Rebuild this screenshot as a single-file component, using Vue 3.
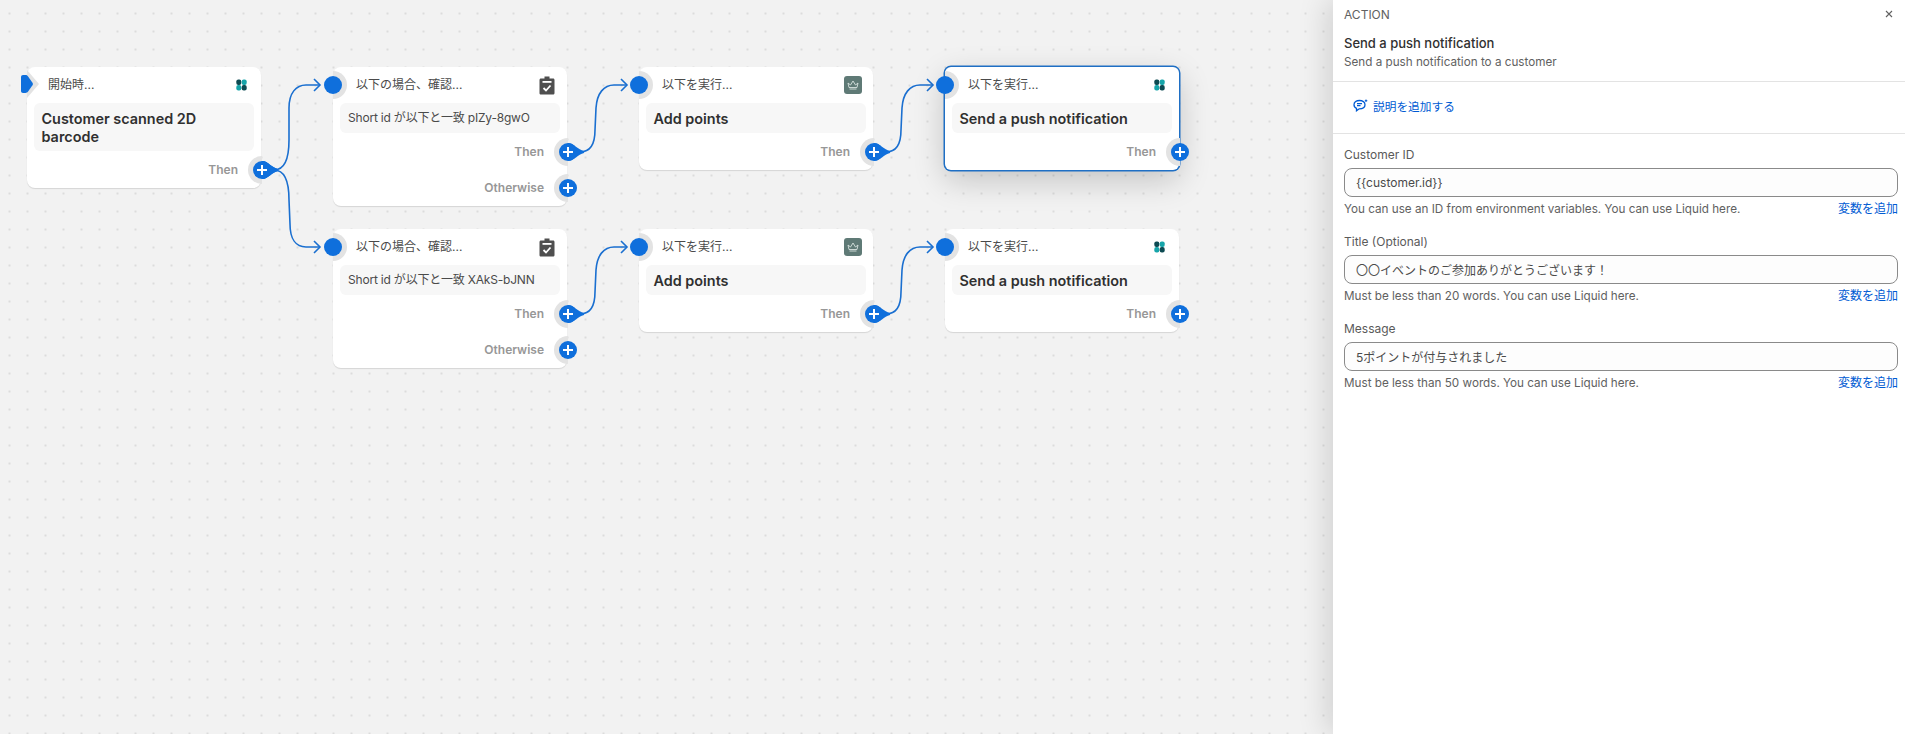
<script setup>
const nodes = [
  { id: 1, x: 27, y: 67, start: true, head: '開始時...', icon: 'logo', title: 'Customer scanned 2D barcode', big: true, outs: ['Then'] },
  { id: 2, x: 333, y: 67, head: '以下の場合、確認...', icon: 'clip', title: 'Short id が以下と一致 pIZy-8gwO', outs: ['Then', 'Otherwise'] },
  { id: 3, x: 639, y: 67, head: '以下を実行...', icon: 'crown', title: 'Add points', big: true, outs: ['Then'] },
  { id: 4, x: 945, y: 67, head: '以下を実行...', icon: 'logo', title: 'Send a push notification', big: true, outs: ['Then'], selected: true },
  { id: 5, x: 333, y: 229, head: '以下の場合、確認...', icon: 'clip', title: 'Short id が以下と一致 XAkS-bJNN', outs: ['Then', 'Otherwise'] },
  { id: 6, x: 639, y: 229, head: '以下を実行...', icon: 'crown', title: 'Add points', big: true, outs: ['Then'] },
  { id: 7, x: 945, y: 229, head: '以下を実行...', icon: 'logo', title: 'Send a push notification', big: true, outs: ['Then'] },
]

// Edges run from the teardrop on a plus button to the arrow in front of the next port.
const tear = (x, y) => `M${x} ${y - 9}C${x + 6} ${y - 9} ${x + 10} ${y - 2} ${x + 16} ${y - 1}L${x + 16} ${y + 1}C${x + 10} ${y + 2} ${x + 6} ${y + 9} ${x} ${y + 9}Z`
const arrow = (x, y) => `M${x - 6} ${y - 6}L${x} ${y}L${x - 6} ${y + 6}`

const edges = [
  { d: 'M274 170C284 170 289 160 289 140L289 108C289 93 296 85 306 85L320 85', from: [262, 170], to: [320, 85] },
  { d: 'M274 170C284 170 289 180 289 200L290 224C290 239 296 247 306 247L320 247', from: [262, 170], to: [320, 247] },
  { d: 'M580 152C590 152 595 145 595 130L596 108C597 93 604 85 614 85L627 85', from: [568, 152], to: [627, 85] },
  { d: 'M886 152C896 152 901 145 901 130L902 108C903 93 910 85 920 85L933 85', from: [874, 152], to: [933, 85] },
  { d: 'M580 314C590 314 595 307 595 292L596 270C597 255 604 247 614 247L627 247', from: [568, 314], to: [627, 247] },
  { d: 'M886 314C896 314 901 307 901 292L902 270C903 255 910 247 920 247L933 247', from: [874, 314], to: [933, 247] },
]

const fields = [
  { label: 'Customer ID', value: '{{customer.id}}', help: 'You can use an ID from environment variables. You can use Liquid here.' },
  { label: 'Title (Optional)', value: '〇〇イベントのご参加ありがとうございます！', help: 'Must be less than 20 words. You can use Liquid here.' },
  { label: 'Message', value: '5ポイントが付与されました', help: 'Must be less than 50 words. You can use Liquid here.' },
]
</script>

<template>
  <div class="page">
    <main class="canvas">
      <svg class="edges" width="1333" height="734">
        <g v-for="(e, i) in edges" :key="i">
          <path class="line" :d="e.d" />
          <path class="line" :d="arrow(e.to[0], e.to[1])" />
          <path class="drop" :d="tear(e.from[0], e.from[1])" />
        </g>
      </svg>

      <section
        v-for="n in nodes"
        :key="n.id"
        class="node"
        :class="{ selected: n.selected, first: n.start }"
        :style="{ left: n.x + 'px', top: n.y + 'px' }"
      >
        <template v-if="n.start">
          <svg class="start" width="20" height="34" viewBox="0 0 20 34">
            <path d="M7 3L19 17L7 31Z" fill="#e3e3e3" />
            <path d="M3 8H5.500C6.500 8 7.300 8.500 7.900 9.200L12.500 15.700C13 16.500 13 17.500 12.500 18.300L7.900 24.800C7.300 25.500 6.500 26 5.500 26H3C1.900 26 1 25.100 1 24V10C1 8.900 1.900 8 3 8Z" fill="#0f6fdc" />
          </svg>
        </template>
        <template v-else>
          <span class="halo in"></span>
          <span class="port"></span>
        </template>

        <header class="head">
          <span>{{ n.head }}</span>
          <svg v-if="n.icon === 'logo'" class="logo" width="11" height="12" viewBox="0 0 11 12">
            <rect x="0.300" y="0.500" width="5" height="5.400" rx="2" fill="#0d4a52" />
            <rect x="5.700" y="0.500" width="5" height="5.400" rx="2" fill="#17a5aa" />
            <rect x="0.300" y="6.100" width="5" height="5.400" rx="2" fill="#17a5aa" />
            <rect x="5.700" y="6.100" width="5" height="5.400" rx="2" fill="#0d4a52" />
          </svg>
          <svg v-else-if="n.icon === 'clip'" class="clip" width="16" height="19" viewBox="0 0 16 19">
            <path d="M5.500 0.500H10.500V2.500H14C15.100 2.500 15.500 3.200 15.500 4V17C15.500 18 14.800 18.500 14 18.500H2C1.100 18.500 .5 18 .5 17V4C.5 3.200 1 2.500 2 2.500H5.500Z" fill="#4f4f4f" />
            <rect x="3.500" y="5" width="9" height="1.800" fill="#fff" />
            <path d="M4.500 12L7 14.500L11.500 9.500" fill="none" stroke="#fff" stroke-width="1.800" />
          </svg>
          <span v-else class="crown">
            <svg width="12" height="10" viewBox="0 0 12 10" fill="none" stroke="#d7e2df" stroke-width="0.900">
              <path d="M1 3L3.500 5L6 1L8.500 5L11 3L10 7.500H2Z" />
              <path d="M2.500 9H9.500" />
            </svg>
          </span>
        </header>

        <div class="box" :class="{ big: n.big }">{{ n.title }}</div>

        <div v-for="o in n.outs" :key="o" class="out">
          <span>{{ o }}</span>
          <span class="halo off"></span>
          <span class="plus"></span>
        </div>
      </section>
    </main>

    <aside class="panel">
      <div class="top">
        <div class="kind">
          <span>ACTION</span>
          <svg width="10" height="10" viewBox="0 0 10 10" stroke="#616161" stroke-width="1.100">
            <path d="M2 2L8 8M8 2L2 8" />
          </svg>
        </div>
        <h2>Send a push notification</h2>
        <p>Send a push notification to a customer</p>
      </div>

      <div class="note">
        <svg width="15" height="13" viewBox="0 0 15 13" fill="none" stroke="#005bd3" stroke-width="1.300">
          <path d="M6.500 1.500C3.500 1.500 1 3 1 5.700C1 7.500 2 8.700 3.500 9.300L3.500 11.800L6.200 9.800C9.500 9.800 12 8.300 12 5.700C12 3 9.500 1.500 6.500 1.500Z" />
          <path d="M4 4.700H9M4 6.700H7.500" />
          <path d="M13 .5V3M11.800 1.700H14.300" stroke-width="1" />
        </svg>
        <span>説明を追加する</span>
      </div>

      <form class="fields">
        <div v-for="f in fields" :key="f.label" class="field">
          <label>{{ f.label }}</label>
          <input :value="f.value" readonly />
          <div class="help">
            <span>{{ f.help }}</span>
            <a>変数を追加</a>
          </div>
        </div>
      </form>
    </aside>
  </div>
</template>

<style>
html,
body {
  margin: 0;
  overflow: hidden;
}
</style>

<style scoped>
.page {
  display: flex;
  height: 734px;
  font-family: Inter, "Noto Sans CJK JP", sans-serif;
  font-size: 12px;
  color: #303030;
}
.canvas {
  position: relative;
  flex: 1;
  overflow: hidden;
  background-color: #f2f2f2;
  background-image: radial-gradient(circle at center, #dcdcdc 0.9px, transparent 1.2px);
  background-size: 18px 18px;
  background-position: 0.5px 4.5px;
}
.edges {
  position: absolute;
  inset: 0;
}
.line {
  fill: none;
  stroke: #1a6fd0;
  stroke-width: 1.6;
}
.drop {
  fill: #0f6fdc;
}

.node {
  position: absolute;
  width: 234px;
  padding-bottom: 1px;
  background: #fff;
  border-radius: 8px;
  box-shadow: 0 1px 1px rgba(0, 0, 0, 0.12);
}
.node.selected {
  border-radius: 6px;
  box-shadow: 0 0 0 1.5px #1f6fc4, 0 10px 32px rgba(0, 0, 0, 0.2);
}
.head {
  display: flex;
  align-items: center;
  justify-content: space-between;
  height: 36px;
  padding: 0 12px 0 23px;
  color: #4a4a4a;
  line-height: 36px;
}
.first .head {
  padding-left: 21px;
}
.logo {
  margin-right: 2px;
}
.crown {
  display: flex;
  align-items: center;
  justify-content: center;
  width: 18px;
  height: 18px;
  margin-right: -1px;
  border-radius: 3px;
  background: #5f7a76;
}
.box {
  margin: 0 7px;
  padding: 6px 8px;
  border-radius: 6px;
  background: #f7f7f7;
  line-height: 18px;
  letter-spacing: -0.2px;
  color: #4a4a4a;
}
.box.big {
  padding: 7px 7.5px 5px;
  font-size: 14.4px;
  font-weight: 600;
  letter-spacing: 0;
  color: #303030;
}
.out {
  position: relative;
  height: 36px;
  padding-right: 23px;
  text-align: right;
  line-height: 38px;
  font-weight: 600;
  color: #979797;
}
.port,
.plus {
  position: absolute;
  width: 18px;
  height: 18px;
  border-radius: 50%;
  background: #0f6fdc;
}
.port {
  left: -9px;
  top: 9px;
}
.plus {
  right: -10px;
  top: 10px;
}
.plus::before,
.plus::after {
  content: "";
  position: absolute;
  background: #fff;
}
.plus::before {
  left: 4px;
  top: 8px;
  width: 10px;
  height: 2px;
}
.plus::after {
  left: 8px;
  top: 4px;
  width: 2px;
  height: 10px;
}
.halo {
  position: absolute;
  width: 14px;
  height: 28px;
  background: #e3e3e3;
}
.halo.in {
  left: 0;
  top: 4px;
  border-radius: 0 14px 14px 0;
}
.halo.off {
  right: -1px;
  top: 5px;
  border-radius: 14px 0 0 14px;
}
.start {
  position: absolute;
  left: -7px;
  top: 0;
}

.panel {
  position: relative;
  width: 572px;
  background: #fff;
  box-shadow: -6px 0 28px rgba(0, 0, 0, 0.14);
}
.top {
  height: 81px;
  padding: 0 7px 0 11px;
  border-bottom: 1px solid #e3e3e3;
}
.kind {
  display: flex;
  align-items: center;
  justify-content: space-between;
  height: 28px;
  color: #616161;
}
.kind svg {
  margin-right: 4px;
}
.top h2 {
  margin: 6px 0 0;
  font-size: 13px;
  font-weight: 550;
  line-height: 18px;
}
.top p {
  margin: 1px 0 0;
  font-size: 11.7px;
  line-height: 18px;
  color: #616161;
}
.note {
  display: flex;
  align-items: center;
  gap: 5px;
  height: 52px;
  padding: 0 0 4px 20px;
  box-sizing: border-box;
  border-bottom: 1px solid #e3e3e3;
  font-size: 11.7px;
  color: #005bd3;
}
.fields {
  display: flex;
  flex-direction: column;
  gap: 15px;
  padding: 12px 7px 0 11px;
}
.field label {
  display: block;
  height: 18px;
  line-height: 18px;
  color: #5a5a5a;
}
.field input {
  display: block;
  width: 100%;
  height: 29px;
  margin-top: 4px;
  padding: 0 11px;
  box-sizing: border-box;
  border: 1px solid #8a8a8a;
  border-radius: 8px;
  outline: none;
  background: #fdfdfd;
  font: inherit;
  color: #4a4a4a;
}
.help {
  display: flex;
  justify-content: space-between;
  margin-top: 3px;
  line-height: 18px;
  font-size: 11.7px;
  color: #616161;
}
.help a {
  font-size: 12px;
  color: #005bd3;
}
</style>
